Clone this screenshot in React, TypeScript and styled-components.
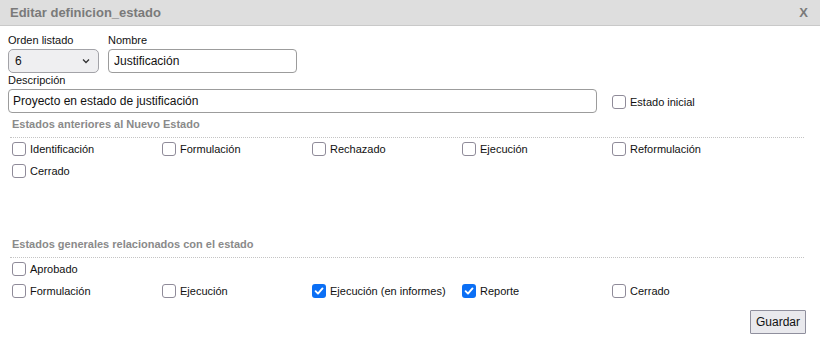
import { useState } from 'react'
import { styled, createGlobalStyle } from 'styled-components'

const GlobalStyle = createGlobalStyle`
	html, body {
		margin: 0;
		padding: 0;
		background: #fff;
	}
	body {
		font-family: "Liberation Sans", Arial, sans-serif;
		color: #111;
	}
`

const previous = ['Identificación', 'Formulación', 'Rechazado', 'Ejecución', 'Reformulación', 'Cerrado']
const general = ['Formulación', 'Ejecución', 'Ejecución (en informes)', 'Reporte', 'Cerrado']

interface CheckProps {
	label: string
	initial?: boolean
}

const Check = (props: CheckProps) => {
	const [checked, setChecked] = useState(!!props.initial)

	return	<CheckLabel>
				<HiddenInput type="checkbox" checked={checked} onChange={() => setChecked(!checked)}/>
				<Box checked={checked}>
					{checked && <svg width="10" height="10" viewBox="0 0 10 10">
						<path d="M1.6 5.2 L4 7.6 L8.5 2.4" fill="none" stroke="#fff" strokeWidth="1.9" strokeLinecap="round" strokeLinejoin="round"/>
					</svg>}
				</Box>
				{props.label}
			</CheckLabel>
}

export default function App() {
	return	<>
				<GlobalStyle/>
				<Dialog>

					<Header>
						<Title>Editar definicion_estado</Title>
						<Close>X</Close>
					</Header>

					<Body>

						<FieldRow>
							<Field>
								<Label>Orden listado</Label>
								<Select>
									<span>6</span>
									<svg width="8" height="6" viewBox="0 0 8 6">
										<path d="M1 1.5 L4 4.5 L7 1.5" fill="none" stroke="#333" strokeWidth="1.3"/>
									</svg>
								</Select>
							</Field>
							<Field>
								<Label>Nombre</Label>
								<TextInput width={189} defaultValue="Justificación"/>
							</Field>
						</FieldRow>

						<Field>
							<Label>Descripción</Label>
							<FieldRow>
								<TextInput width={589} defaultValue="Proyecto en estado de justificación" indent={4}/>
								<InitialCheck>
									<Check label="Estado inicial"/>
								</InitialCheck>
							</FieldRow>
						</Field>

						<Section>
							<SectionTitle>Estados anteriores al Nuevo Estado</SectionTitle>
							<CheckGrid minHeight={95}>
								{previous.map(p => <Check key={p} label={p}/>)}
							</CheckGrid>
						</Section>

						<Section>
							<SectionTitle>Estados generales relacionados con el estado</SectionTitle>
							<CheckGrid>
								<Check label="Aprobado"/>
							</CheckGrid>
							<CheckGrid>
								{general.map(g => <Check key={g} label={g} initial={g === 'Ejecución (en informes)' || g === 'Reporte'}/>)}
							</CheckGrid>
						</Section>

						<Footer>
							<Button>Guardar</Button>
						</Footer>

					</Body>
				</Dialog>
			</>
}

const Dialog = styled.div`
	width: 820px;
	height: 346px;
	background: #fff;
	overflow: hidden;
`

const Header = styled.div`
	height: 25px;
	background: #dedede;
	border-bottom: 1px solid #c9c9c9;
	display: flex;
	align-items: center;
	justify-content: space-between;
	padding: 0 12px 0 10px;
`

const Title = styled.div`
	font-size: 13px;
	font-weight: bold;
	color: #7a7a7a;
`

const Close = styled.div`
	font-size: 13px;
	font-weight: bold;
	color: #7a7a7a;
`

const Body = styled.div`
	padding: 7px 8px 0 8px;
`

const FieldRow = styled.div`
	display: flex;
	align-items: center;
	gap: 9px;
`

const Field = styled.div`
	display: flex;
	flex-direction: column;
`

const Label = styled.div`
	font-size: 11px;
	line-height: 15px;
	margin-bottom: 1px;
	color: #111;
`

const Select = styled.div`
	box-sizing: border-box;
	width: 91px;
	height: 24px;
	padding: 0 8px 0 6px;
	display: flex;
	align-items: center;
	justify-content: space-between;
	background: #efeff1;
	border: 1px solid #a3a3a8;
	border-radius: 5px;
	font-size: 12px;
	color: #111;
`

const TextInput = styled.input<{width:number, indent?:number}>`
	box-sizing: border-box;
	width: ${props => props.width}px;
	height: 24px;
	padding: 0 ${props => props.indent ?? 5}px;
	border: 1px solid #9c9c9c;
	border-radius: 4px;
	font-family: "Liberation Sans", Arial, sans-serif;
	font-size: 12px;
	color: #111;
	outline: none;
`

const InitialCheck = styled.div`
	margin-left: 6px;
	margin-top: 1px;
`

const Section = styled.div`
	margin: 4px 8px 0 2px;
`

const SectionTitle = styled.div`
	font-size: 11px;
	line-height: 14px;
	font-weight: bold;
	color: #8a8a8a;
	padding: 0 0 6px 2px;
	border-bottom: 1px dotted #c4c4c4;
`

const CheckGrid = styled.div<{minHeight?:number}>`
	display: grid;
	grid-template-columns: repeat(5, 150px);
	grid-auto-rows: 22px;
	align-content: start;
	padding-left: 2px;
	min-height: ${props => props.minHeight ?? 0}px;
`

const CheckLabel = styled.label`
	display: flex;
	align-items: center;
	gap: 4px;
	font-size: 11px;
	color: #111;
	white-space: nowrap;
`

const HiddenInput = styled.input`
	position: absolute;
	opacity: 0;
	width: 0;
	height: 0;
	margin: 0;
`

const Box = styled.span<{checked:boolean}>`
	box-sizing: border-box;
	width: 14px;
	height: 14px;
	border-radius: 3px;
	border: ${props => props.checked ? 'none' : '1.5px solid #8f8b99'};
	background: ${props => props.checked ? '#0b6ff5' : '#fff'};
	display: flex;
	align-items: center;
	justify-content: center;
`

const Footer = styled.div`
	display: flex;
	justify-content: flex-end;
	padding: 8px 6px 0 0;
`

const Button = styled.button`
	box-sizing: border-box;
	height: 24px;
	padding: 0 5px;
	background: #e9e9ed;
	border: 1px solid #8f8f9d;
	border-radius: 1px;
	font-family: "Liberation Sans", Arial, sans-serif;
	font-size: 12px;
	color: #111;
`
